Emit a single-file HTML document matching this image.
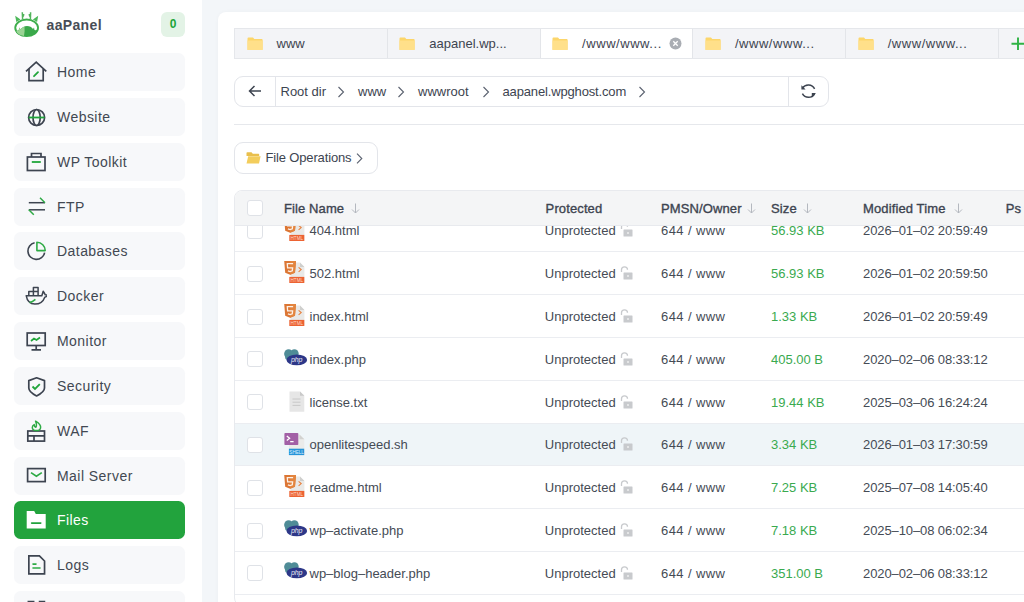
<!DOCTYPE html>
<html><head><meta charset="utf-8">
<style>
*{box-sizing:border-box;margin:0;padding:0}
html,body{width:1024px;height:602px;overflow:hidden;background:#f3f6f9;font-family:"Liberation Sans",sans-serif;color:#3d4450}
.abs{position:absolute}
#side{position:absolute;left:0;top:0;width:201.5px;height:602px;background:#fff}
.logo-t{position:absolute;left:46.5px;top:16.5px;font-size:14px;line-height:16px;font-weight:bold;color:#474d57;letter-spacing:0.35px}
.badge{position:absolute;left:161px;top:12px;width:24px;height:25px;border-radius:6px;background:#e3f3e6;color:#20a53a;font-size:12px;font-weight:bold;text-align:center;line-height:25px}
.item{position:absolute;left:14px;width:171px;height:38px;border-radius:6.5px;background:#f7f8fa}
.item .t{position:absolute;left:43px;top:0;line-height:38px;font-size:14px;color:#424852;letter-spacing:0.45px}
.item svg{position:absolute;left:11px;top:8px;width:22px;height:22px}
.item.on{background:#22a33d}
.item.on .t{color:#fff}
#card{position:absolute;left:218px;top:12px;width:830px;height:620px;background:#fff;border-radius:8px;box-shadow:0 0 4px rgba(0,0,0,0.03)}
#tabs{position:absolute;left:234px;top:28.3px;width:820px;height:30.4px;background:#f3f4f7;border:1px solid #e5e7eb}
.tab{position:absolute;top:0;height:28.4px;width:152.8px;border-right:1px solid #e3e5e9}
.tab .f{position:absolute;left:11.5px;top:7.5px;line-height:0}
.tab .f svg,#fop svg{display:block}
.tab .t{position:absolute;left:41.5px;top:0;line-height:29px;font-size:13px;color:#3d4450}
.tab.on{background:#fff}
#crumb{position:absolute;left:234px;top:75.6px;width:594.5px;height:31.6px;border:1px solid #e3e5ea;border-radius:9px;background:#fff}
.ct{position:absolute;top:0;line-height:29.6px;font-size:13px;color:#3d4450}
#hr{position:absolute;left:234px;top:123.8px;width:800px;height:1px;background:#e6e8ec}
#fop{position:absolute;left:234px;top:142px;width:144px;height:32px;border:1px solid #e3e5ea;border-radius:9px;background:#fff}
#tbl{position:absolute;left:234px;top:190.3px;width:820px;height:416px;border:1px solid #e8eaee;border-radius:8px;overflow:hidden;background:#fff}
.row{position:absolute;left:0;width:820px;height:42.785px;border-bottom:1px solid #ebedf1}
.row.hl{background:#eff5f8}
.cb{position:absolute;left:12px;width:16.4px;height:16px;border:1px solid #dfe2e7;border-radius:3px;background:#fff}

.g{color:#3aaa4f}
#head{position:absolute;left:0;top:0;width:820px;height:35px;background:#f4f5f6;border-bottom:1px solid #e8eaee}
.h{position:absolute;top:0.1px;line-height:35px;font-size:13px;color:#3d4450;-webkit-text-stroke:0.35px #3d4450;white-space:nowrap;letter-spacing:0.12px}
.rc{position:absolute;top:21.36px;height:0;font-size:13px;color:#454b55;white-space:nowrap}
.rc span{position:absolute;left:0;top:-7.6px;line-height:16px}
.rc.g span{color:#3aaa4f}
.dt span{letter-spacing:-0.1px}
.ow span{letter-spacing:0.4px}
.arr{position:absolute;top:12px}
</style></head><body>
<div id="side">
  <svg class="abs" style="left:13px;top:11px" width="28" height="28" viewBox="0 0 28 28">
    <path d="M2.2,4.8 L7.5,8.6 L3.3,11 Z M25.2,4.8 L19.9,8.6 L24.1,11 Z" fill="#4db85a"/>
    <path d="M9.3,1.3 L9.6,8 M10.8,3 L10.2,5.5 M17.6,1.3 L17.4,8 M16.2,3 L16.8,5.5" stroke="#52b45c" stroke-width="1.5"/>
    <ellipse cx="13.65" cy="16.8" rx="11.4" ry="8.3" fill="none" stroke="#3fae4d" stroke-width="1.9"/>
    <path d="M2.6,19 Q4.5,20.5 6,18.5 L6.5,16.5 L7.5,18.5 Q10,15 14,15 Q18,15 20,18 L21,16.5 L21.5,19 Q23,19.5 24.8,18.5 Q24,25 13.65,25.2 Q3.5,25 2.6,19 Z" fill="#3aa84a"/>
    <path d="M3,19.5 Q5,20.5 6,18.5 L6.5,16.5 L7.5,18.5 Q9,16.5 11.5,15.5 Q12,20 11,25 Q4.5,24 3,19.5 Z" fill="#9ad494"/>
  </svg>
  <div class="logo-t">aaPanel</div>
  <div class="badge">0</div>

  <div class="item" style="top:53.1px"><svg viewBox="0 0 22 22" fill="none" stroke="#3d4450" stroke-width="1.7"><path d="M1,10.3 L11.2,1.2 L21.3,10.3"/><path d="M4,8 V19.6 H18.2 V8"/><path d="M9,15.2 L13,11.2" stroke="#20a53a" stroke-width="1.8" stroke-linecap="round"/></svg><div class="t">Home</div></div>
  <div class="item" style="top:97.9px"><svg viewBox="0 0 22 22" fill="none" stroke="#3d4450" stroke-width="1.7"><circle cx="11.6" cy="11.5" r="8"/><ellipse cx="11.6" cy="11.5" rx="3.6" ry="8"/><path d="M3.6,11.5 H19.6" stroke="#20a53a" stroke-width="1.8"/></svg><div class="t">Website</div></div>
  <div class="item" style="top:142.8px"><svg viewBox="0 0 22 22" fill="none" stroke="#3d4450" stroke-width="1.7"><rect x="2.4" y="6" width="17.6" height="13.5"/><path d="M6.5,6 V2.5 H16 V6"/><path d="M6.8,11 H15.8" stroke="#20a53a" stroke-width="1.8"/></svg><div class="t">WP Toolkit</div></div>
  <div class="item" style="top:187.6px"><svg viewBox="0 0 22 22" fill="none" stroke="#3d4450" stroke-width="1.5"><path d="M3.8,6.7 H20"/><path d="M20,6.7 L15,1.7" stroke="#2eaa45"/><path d="M20,13.8 H3.8"/><path d="M3.8,13.8 L8.8,18.8" stroke="#2eaa45"/></svg><div class="t">FTP</div></div>
  <div class="item" style="top:232.4px"><svg viewBox="0 0 22 22" fill="none" stroke="#3d4450" stroke-width="1.6"><path d="M9.6,2.8 A8.4,8.4 0 1 0 19.6,12.6"/><path d="M11.9,2.3 V10.6 H20.2 A8.3,8.3 0 0 0 11.9,2.3 Z" stroke="#2eaa45" stroke-width="1.6" stroke-linejoin="round"/></svg><div class="t">Databases</div></div>
  <div class="item" style="top:277.3px"><svg viewBox="0 0 22 22" fill="none" stroke="#3d4450" stroke-width="1.5" stroke-linejoin="round"><path d="M1.2,10.7 H16.8 Q17.6,8.4 18.2,6.2 Q19.6,8 20.2,9.8 Q21.6,9.8 22.6,10.4 Q21.4,11.9 19.8,12.2 Q17.2,19.2 9.8,19.1 Q2.6,18.9 1.2,10.7 Z"/><path d="M3.8,10.7 V6.6 H13.1 V10.7 M8.4,10.7 V2.4 H13.1 V6.6"/><path d="M4.6,17.6 Q7.6,16.8 10.4,14.4" stroke="#2eaa45" stroke-width="1.7"/></svg><div class="t">Docker</div></div>
  <div class="item" style="top:322.1px"><svg viewBox="0 0 22 22" fill="none" stroke="#3d4450" stroke-width="1.7"><rect x="2.2" y="3" width="18" height="12.5"/><path d="M11.2,15.5 V19.5 M6.5,19.8 H16"/><path d="M6,11 L9,8.5 L11.5,10 L15,7.5" stroke="#20a53a" stroke-width="1.7"/></svg><div class="t">Monitor</div></div>
  <div class="item" style="top:366.9px"><svg viewBox="0 0 22 22" fill="none" stroke="#3d4450" stroke-width="1.7"><path d="M11.6,2.8 L19.5,5.6 V13 Q19.5,17 11.6,20.9 Q3.8,17 3.8,13 V5.6 Z" stroke-linejoin="round"/><path d="M7.5,11.5 L10,14 L14.8,9.2" stroke="#20a53a" stroke-width="1.8"/></svg><div class="t">Security</div></div>
  <div class="item" style="top:411.8px"><svg viewBox="0 0 22 22" fill="none" stroke="#3d4450" stroke-width="1.7"><rect x="2.8" y="11" width="16.7" height="10.1"/><path d="M2.8,15.9 H19.5 M9,15.9 V21"/><path d="M10.6,1.2 Q16.2,4.5 15.6,7.8 Q15,10.6 11.2,10.6 Q7.4,10.6 7.3,7.6 Q7.3,5.6 9.2,4.6 Q9.2,6.8 10.8,7.2 Q12.2,5.5 10.6,1.2 Z" stroke="#2eaa45" stroke-width="1.5" stroke-linejoin="round"/></svg><div class="t">WAF</div></div>
  <div class="item" style="top:456.6px"><svg viewBox="0 0 22 22" fill="none" stroke="#3d4450" stroke-width="1.7"><rect x="2.6" y="3.6" width="17.6" height="13"/><path d="M6,7.6 L11.4,11.2 L16.8,7.6" stroke="#2eaa45" stroke-width="1.7"/></svg><div class="t">Mail Server</div></div>
  <div class="item on" style="top:501.4px"><svg viewBox="0 0 22 22"><path d="M1.7,2.1 H9.2 L10.8,5.1 H20.7 V19.5 H1.7 Z" fill="#fff"/><path d="M6.6,14.1 H15.8" stroke="#22a33d" stroke-width="1.6" stroke-linecap="round"/></svg><div class="t">Files</div></div>
  <div class="item" style="top:546.2px"><svg viewBox="0 0 22 22" fill="none" stroke="#3d4450" stroke-width="1.7"><path d="M3.85,1.85 H14.4 L19.55,7 V19.85 H3.85 Z"/><path d="M8,10.1 H11 M8,14 H15" stroke="#2eaa45" stroke-width="1.6" stroke-linecap="round"/></svg><div class="t">Logs</div></div>
  <div class="item" style="top:591.1px"><svg viewBox="0 0 22 22" fill="none" stroke="#3d4450" stroke-width="1.7"><path d="M3.4,2.5 H8.6 V9 H3.4 Z M14.6,2.5 H19.4 V9 H14.6 Z"/></svg></div>
</div>

<div id="card"></div>
<div id="tabs"><div class="tab" style="left:0.0px"><div class="f"><svg width="16" height="13.6" viewBox="0 0 16 13"><path d="M0.5,1.2 Q0.5,0.3 1.4,0.3 H6 L7.3,1.8 H14.8 Q15.6,1.8 15.6,2.7 V12 Q15.6,12.8 14.8,12.8 H1.3 Q0.5,12.8 0.5,12 Z" fill="#fcd66b"/><path d="M0.5,3.2 H15.6 V12 Q15.6,12.8 14.8,12.8 H1.3 Q0.5,12.8 0.5,12 Z" fill="#ffe08a"/></svg></div><div class="t">www</div></div><div class="tab" style="left:152.8px"><div class="f"><svg width="16" height="13.6" viewBox="0 0 16 13"><path d="M0.5,1.2 Q0.5,0.3 1.4,0.3 H6 L7.3,1.8 H14.8 Q15.6,1.8 15.6,2.7 V12 Q15.6,12.8 14.8,12.8 H1.3 Q0.5,12.8 0.5,12 Z" fill="#fcd66b"/><path d="M0.5,3.2 H15.6 V12 Q15.6,12.8 14.8,12.8 H1.3 Q0.5,12.8 0.5,12 Z" fill="#ffe08a"/></svg></div><div class="t">aapanel.wp...</div></div><div class="tab on" style="left:305.6px"><div class="f"><svg width="16" height="13.6" viewBox="0 0 16 13"><path d="M0.5,1.2 Q0.5,0.3 1.4,0.3 H6 L7.3,1.8 H14.8 Q15.6,1.8 15.6,2.7 V12 Q15.6,12.8 14.8,12.8 H1.3 Q0.5,12.8 0.5,12 Z" fill="#fcd66b"/><path d="M0.5,3.2 H15.6 V12 Q15.6,12.8 14.8,12.8 H1.3 Q0.5,12.8 0.5,12 Z" fill="#ffe08a"/></svg></div><div class="t" style="letter-spacing:0.55px">/www/www...</div><svg class="abs" style="left:128.5px;top:8px" width="13" height="13" viewBox="0 0 13 13"><circle cx="6.5" cy="6.5" r="6" fill="#a9adb3"/><path d="M4.3,4.3 L8.7,8.7 M8.7,4.3 L4.3,8.7" stroke="#fff" stroke-width="1.3"/></svg></div><div class="tab" style="left:458.4px"><div class="f"><svg width="16" height="13.6" viewBox="0 0 16 13"><path d="M0.5,1.2 Q0.5,0.3 1.4,0.3 H6 L7.3,1.8 H14.8 Q15.6,1.8 15.6,2.7 V12 Q15.6,12.8 14.8,12.8 H1.3 Q0.5,12.8 0.5,12 Z" fill="#fcd66b"/><path d="M0.5,3.2 H15.6 V12 Q15.6,12.8 14.8,12.8 H1.3 Q0.5,12.8 0.5,12 Z" fill="#ffe08a"/></svg></div><div class="t" style="letter-spacing:0.55px">/www/www...</div></div><div class="tab" style="left:611.2px"><div class="f"><svg width="16" height="13.6" viewBox="0 0 16 13"><path d="M0.5,1.2 Q0.5,0.3 1.4,0.3 H6 L7.3,1.8 H14.8 Q15.6,1.8 15.6,2.7 V12 Q15.6,12.8 14.8,12.8 H1.3 Q0.5,12.8 0.5,12 Z" fill="#fcd66b"/><path d="M0.5,3.2 H15.6 V12 Q15.6,12.8 14.8,12.8 H1.3 Q0.5,12.8 0.5,12 Z" fill="#ffe08a"/></svg></div><div class="t" style="letter-spacing:0.55px">/www/www...</div></div><svg class="abs" style="left:776px;top:7.6px" width="14" height="14" viewBox="0 0 14 14"><path d="M7,0.5 V13 M0.5,6.8 H13.5" stroke="#2fb344" stroke-width="1.9"/></svg></div>
<div id="crumb"><svg class="abs" style="left:13px;top:7.6px" width="14" height="14" viewBox="0 0 14 14"><path d="M13,7 H1.5 M6.5,2 L1.5,7 L6.5,12" fill="none" stroke="#3d4450" stroke-width="1.5"/></svg><div class="abs" style="left:39.5px;top:0;width:1px;height:29.6px;background:#e3e5ea"></div><div class="ct" style="left:45.5px">Root dir</div><svg class="abs" style="left:101.5px;top:9px" width="8" height="12" viewBox="0 0 8 12"><path d="M1.5,1 L6.5,6 L1.5,11" fill="none" stroke="#5b6270" stroke-width="1.1"/></svg><div class="ct" style="left:123px">www</div><svg class="abs" style="left:162px;top:9px" width="8" height="12" viewBox="0 0 8 12"><path d="M1.5,1 L6.5,6 L1.5,11" fill="none" stroke="#5b6270" stroke-width="1.1"/></svg><div class="ct" style="left:183px">wwwroot</div><svg class="abs" style="left:247px;top:9px" width="8" height="12" viewBox="0 0 8 12"><path d="M1.5,1 L6.5,6 L1.5,11" fill="none" stroke="#5b6270" stroke-width="1.1"/></svg><div class="ct" style="left:267.5px;letter-spacing:-0.15px">aapanel.wpghost.com</div><svg class="abs" style="left:402.5px;top:9px" width="8" height="12" viewBox="0 0 8 12"><path d="M1.5,1 L6.5,6 L1.5,11" fill="none" stroke="#5b6270" stroke-width="1.1"/></svg><div class="abs" style="left:552.8px;top:0;width:1px;height:29.6px;background:#e3e5ea"></div><svg class="abs" style="left:565.5px;top:7.6px" width="16" height="15" viewBox="0 0 16 15"><path d="M13.6,4.9 A7,7 0 0 0 1.4,4.2 M1.4,9.6 A7,7 0 0 0 13.6,9.8" fill="none" stroke="#3d4450" stroke-width="1.5"/><path d="M0.2,1.2 V5.6 H4.4 Z M14.8,8.9 H10.6 V13.3 Z" fill="#3d4450" transform="translate(0.2 0)"/></svg></div>
<div id="hr"></div>
<div id="fop"><svg class="abs" style="left:11px;top:9px" width="15" height="12" viewBox="0 0 15 12"><path d="M0.5,1 Q0.5,0.3 1.2,0.3 H5.5 L6.8,1.8 H12.5 Q13.2,1.8 13.2,2.5 V4 H0.5 Z" fill="#e9bf4c"/><path d="M0.5,11.5 L2.2,4.3 H14.6 L13,11.5 Z" fill="#f3cd5c"/></svg><div class="ct" style="left:30.5px;line-height:30px;letter-spacing:-0.15px">File Operations</div><svg class="abs" style="left:120.5px;top:9.8px" width="7" height="11" viewBox="0 0 7 11"><path d="M1,0.6 L5.8,5.5 L1,10.4" fill="none" stroke="#5b6270" stroke-width="1.1"/></svg></div>
<div id="tbl"><div class="row" style="top:18.40px"><div class="cb" style="top:13.4px"></div><div class="abs" style="left:48.7px;top:8.959999999999999px;line-height:0"><svg width="21" height="22" viewBox="0 0 21 22" style="display:block"><path d="M6.5,1.6 H16 L20.4,6 V21.6 H6.5 Z" fill="#e9e9e7"/><path d="M16,1.6 V6 H20.4 Z" fill="#cfcfcd"/><path d="M0.2,0 H12 L11,11.8 L6.1,13.7 L1.2,11.8 Z" fill="#dc7634"/><path d="M6.1,0 H12 L11,11.8 L6.1,13.7 Z" fill="#e3853f"/><path d="M9.1,2.6 H3.3 L3.6,6.8 H8.6 L8.3,9.8 L6.1,10.6 L3.9,9.8" fill="none" stroke="#fdf1e6" stroke-width="1.3"/><path d="M14.6,6.3 L17.2,8.6 L14.6,10.9" fill="none" stroke="#e8813f" stroke-width="1.1"/><rect x="5.3" y="15.9" width="15" height="6.1" fill="#ec6333"/><text x="12.8" y="20.6" font-size="4.6" fill="#ffd9c8" text-anchor="middle" font-family="Liberation Sans">HTML</text></svg></div><div class="rc" style="left:74.5px"><span>404.html</span></div><div class="rc" style="left:309.8px"><span>Unprotected</span><svg class="abs" style="left:74px;top:-7.6px" width="14" height="14" viewBox="0 0 14 14"><path d="M2.5,6 V3.8 A3,3 0 0 1 8.5,3.8" fill="none" stroke="#c8cacd" stroke-width="1.3"/><rect x="4.5" y="6.5" width="9" height="7" rx="0.5" fill="#c8cacd"/><rect x="8.5" y="9" width="1" height="2" fill="#fff"/></svg></div><div class="rc ow" style="left:426px"><span>644 / www</span></div><div class="rc g" style="left:536px"><span>56.93 KB</span></div><div class="rc dt" style="left:628px"><span>2026&#8211;01&#8211;02 20:59:49</span></div></div><div class="row" style="top:61.18px"><div class="cb" style="top:13.4px"></div><div class="abs" style="left:48.7px;top:8.959999999999999px;line-height:0"><svg width="21" height="22" viewBox="0 0 21 22" style="display:block"><path d="M6.5,1.6 H16 L20.4,6 V21.6 H6.5 Z" fill="#e9e9e7"/><path d="M16,1.6 V6 H20.4 Z" fill="#cfcfcd"/><path d="M0.2,0 H12 L11,11.8 L6.1,13.7 L1.2,11.8 Z" fill="#dc7634"/><path d="M6.1,0 H12 L11,11.8 L6.1,13.7 Z" fill="#e3853f"/><path d="M9.1,2.6 H3.3 L3.6,6.8 H8.6 L8.3,9.8 L6.1,10.6 L3.9,9.8" fill="none" stroke="#fdf1e6" stroke-width="1.3"/><path d="M14.6,6.3 L17.2,8.6 L14.6,10.9" fill="none" stroke="#e8813f" stroke-width="1.1"/><rect x="5.3" y="15.9" width="15" height="6.1" fill="#ec6333"/><text x="12.8" y="20.6" font-size="4.6" fill="#ffd9c8" text-anchor="middle" font-family="Liberation Sans">HTML</text></svg></div><div class="rc" style="left:74.5px"><span>502.html</span></div><div class="rc" style="left:309.8px"><span>Unprotected</span><svg class="abs" style="left:74px;top:-7.6px" width="14" height="14" viewBox="0 0 14 14"><path d="M2.5,6 V3.8 A3,3 0 0 1 8.5,3.8" fill="none" stroke="#c8cacd" stroke-width="1.3"/><rect x="4.5" y="6.5" width="9" height="7" rx="0.5" fill="#c8cacd"/><rect x="8.5" y="9" width="1" height="2" fill="#fff"/></svg></div><div class="rc ow" style="left:426px"><span>644 / www</span></div><div class="rc g" style="left:536px"><span>56.93 KB</span></div><div class="rc dt" style="left:628px"><span>2026&#8211;01&#8211;02 20:59:50</span></div></div><div class="row" style="top:103.97px"><div class="cb" style="top:13.4px"></div><div class="abs" style="left:48.7px;top:8.959999999999999px;line-height:0"><svg width="21" height="22" viewBox="0 0 21 22" style="display:block"><path d="M6.5,1.6 H16 L20.4,6 V21.6 H6.5 Z" fill="#e9e9e7"/><path d="M16,1.6 V6 H20.4 Z" fill="#cfcfcd"/><path d="M0.2,0 H12 L11,11.8 L6.1,13.7 L1.2,11.8 Z" fill="#dc7634"/><path d="M6.1,0 H12 L11,11.8 L6.1,13.7 Z" fill="#e3853f"/><path d="M9.1,2.6 H3.3 L3.6,6.8 H8.6 L8.3,9.8 L6.1,10.6 L3.9,9.8" fill="none" stroke="#fdf1e6" stroke-width="1.3"/><path d="M14.6,6.3 L17.2,8.6 L14.6,10.9" fill="none" stroke="#e8813f" stroke-width="1.1"/><rect x="5.3" y="15.9" width="15" height="6.1" fill="#ec6333"/><text x="12.8" y="20.6" font-size="4.6" fill="#ffd9c8" text-anchor="middle" font-family="Liberation Sans">HTML</text></svg></div><div class="rc" style="left:74.5px"><span>index.html</span></div><div class="rc" style="left:309.8px"><span>Unprotected</span><svg class="abs" style="left:74px;top:-7.6px" width="14" height="14" viewBox="0 0 14 14"><path d="M2.5,6 V3.8 A3,3 0 0 1 8.5,3.8" fill="none" stroke="#c8cacd" stroke-width="1.3"/><rect x="4.5" y="6.5" width="9" height="7" rx="0.5" fill="#c8cacd"/><rect x="8.5" y="9" width="1" height="2" fill="#fff"/></svg></div><div class="rc ow" style="left:426px"><span>644 / www</span></div><div class="rc g" style="left:536px"><span>1.33 KB</span></div><div class="rc dt" style="left:628px"><span>2026&#8211;01&#8211;02 20:59:49</span></div></div><div class="row" style="top:146.75px"><div class="cb" style="top:13.4px"></div><div class="abs" style="left:48.7px;top:10.459999999999999px;line-height:0"><svg width="24" height="17" viewBox="0 0 24 17" style="display:block"><ellipse cx="4.6" cy="4.6" rx="4.4" ry="4.4" fill="#4f8c97"/><ellipse cx="10.4" cy="4.8" rx="4.3" ry="4.6" fill="#4f8c97"/><path d="M0.4,5 L1.5,10 L4,11.5 L9,10 Z" fill="#4f8c97"/><ellipse cx="12.8" cy="10.9" rx="10.3" ry="5.4" fill="#2d3788"/><text x="12.6" y="13.2" font-size="7" font-style="italic" fill="#e8ecf6" text-anchor="middle" font-family="Liberation Sans" letter-spacing="-0.2">php</text></svg></div><div class="rc" style="left:74.5px"><span>index.php</span></div><div class="rc" style="left:309.8px"><span>Unprotected</span><svg class="abs" style="left:74px;top:-7.6px" width="14" height="14" viewBox="0 0 14 14"><path d="M2.5,6 V3.8 A3,3 0 0 1 8.5,3.8" fill="none" stroke="#c8cacd" stroke-width="1.3"/><rect x="4.5" y="6.5" width="9" height="7" rx="0.5" fill="#c8cacd"/><rect x="8.5" y="9" width="1" height="2" fill="#fff"/></svg></div><div class="rc ow" style="left:426px"><span>644 / www</span></div><div class="rc g" style="left:536px"><span>405.00 B</span></div><div class="rc dt" style="left:628px"><span>2020&#8211;02&#8211;06 08:33:12</span></div></div><div class="row" style="top:189.54px"><div class="cb" style="top:13.4px"></div><div class="abs" style="left:54.0px;top:10.36px;line-height:0"><svg width="16" height="21" viewBox="0 0 16 21" style="display:block"><path d="M0.5,0.5 H11 L15.3,4.8 V20.8 H0.5 Z" fill="#e6e6e6"/><path d="M11,0.5 V4.8 H15.3 Z" fill="#c9c9c9"/><path d="M3.5,8 H11.5 M3.5,11.2 H11.5 M3.5,14.4 H11.5" stroke="#c4c4c4" stroke-width="0.9"/></svg></div><div class="rc" style="left:74.5px"><span>license.txt</span></div><div class="rc" style="left:309.8px"><span>Unprotected</span><svg class="abs" style="left:74px;top:-7.6px" width="14" height="14" viewBox="0 0 14 14"><path d="M2.5,6 V3.8 A3,3 0 0 1 8.5,3.8" fill="none" stroke="#c8cacd" stroke-width="1.3"/><rect x="4.5" y="6.5" width="9" height="7" rx="0.5" fill="#c8cacd"/><rect x="8.5" y="9" width="1" height="2" fill="#fff"/></svg></div><div class="rc ow" style="left:426px"><span>644 / www</span></div><div class="rc g" style="left:536px"><span>19.44 KB</span></div><div class="rc dt" style="left:628px"><span>2025&#8211;03&#8211;06 16:24:24</span></div></div><div class="row hl" style="top:232.32px"><div class="cb" style="top:13.4px"></div><div class="abs" style="left:48.7px;top:9.36px;line-height:0"><svg width="21" height="23" viewBox="0 0 21 23" style="display:block"><path d="M5,1.5 H15.5 L20.3,6.3 V22.2 H5 Z" fill="#ebebea"/><path d="M15.5,1.5 V6.3 H20.3 Z" fill="#d2d2d0"/><rect x="0.4" y="0" width="13.9" height="12" rx="0.8" fill="#a260a6"/><path d="M2.8,3 L5.6,5.2 L2.8,7.4 M6.2,8.6 H9.6" fill="none" stroke="#fff" stroke-width="1.3"/><rect x="4.9" y="15.7" width="15.3" height="6.4" fill="#2694d8"/><text x="12.6" y="20.6" font-size="4.6" fill="#dff0ff" text-anchor="middle" font-family="Liberation Sans">SHELL</text></svg></div><div class="rc" style="left:74.5px"><span>openlitespeed.sh</span></div><div class="rc" style="left:309.8px"><span>Unprotected</span><svg class="abs" style="left:74px;top:-7.6px" width="14" height="14" viewBox="0 0 14 14"><path d="M2.5,6 V3.8 A3,3 0 0 1 8.5,3.8" fill="none" stroke="#c8cacd" stroke-width="1.3"/><rect x="4.5" y="6.5" width="9" height="7" rx="0.5" fill="#c8cacd"/><rect x="8.5" y="9" width="1" height="2" fill="#fff"/></svg></div><div class="rc ow" style="left:426px"><span>644 / www</span></div><div class="rc g" style="left:536px"><span>3.34 KB</span></div><div class="rc dt" style="left:628px"><span>2026&#8211;01&#8211;03 17:30:59</span></div></div><div class="row" style="top:275.11px"><div class="cb" style="top:13.4px"></div><div class="abs" style="left:48.7px;top:8.959999999999999px;line-height:0"><svg width="21" height="22" viewBox="0 0 21 22" style="display:block"><path d="M6.5,1.6 H16 L20.4,6 V21.6 H6.5 Z" fill="#e9e9e7"/><path d="M16,1.6 V6 H20.4 Z" fill="#cfcfcd"/><path d="M0.2,0 H12 L11,11.8 L6.1,13.7 L1.2,11.8 Z" fill="#dc7634"/><path d="M6.1,0 H12 L11,11.8 L6.1,13.7 Z" fill="#e3853f"/><path d="M9.1,2.6 H3.3 L3.6,6.8 H8.6 L8.3,9.8 L6.1,10.6 L3.9,9.8" fill="none" stroke="#fdf1e6" stroke-width="1.3"/><path d="M14.6,6.3 L17.2,8.6 L14.6,10.9" fill="none" stroke="#e8813f" stroke-width="1.1"/><rect x="5.3" y="15.9" width="15" height="6.1" fill="#ec6333"/><text x="12.8" y="20.6" font-size="4.6" fill="#ffd9c8" text-anchor="middle" font-family="Liberation Sans">HTML</text></svg></div><div class="rc" style="left:74.5px"><span>readme.html</span></div><div class="rc" style="left:309.8px"><span>Unprotected</span><svg class="abs" style="left:74px;top:-7.6px" width="14" height="14" viewBox="0 0 14 14"><path d="M2.5,6 V3.8 A3,3 0 0 1 8.5,3.8" fill="none" stroke="#c8cacd" stroke-width="1.3"/><rect x="4.5" y="6.5" width="9" height="7" rx="0.5" fill="#c8cacd"/><rect x="8.5" y="9" width="1" height="2" fill="#fff"/></svg></div><div class="rc ow" style="left:426px"><span>644 / www</span></div><div class="rc g" style="left:536px"><span>7.25 KB</span></div><div class="rc dt" style="left:628px"><span>2025&#8211;07&#8211;08 14:05:40</span></div></div><div class="row" style="top:317.89px"><div class="cb" style="top:13.4px"></div><div class="abs" style="left:48.7px;top:10.459999999999999px;line-height:0"><svg width="24" height="17" viewBox="0 0 24 17" style="display:block"><ellipse cx="4.6" cy="4.6" rx="4.4" ry="4.4" fill="#4f8c97"/><ellipse cx="10.4" cy="4.8" rx="4.3" ry="4.6" fill="#4f8c97"/><path d="M0.4,5 L1.5,10 L4,11.5 L9,10 Z" fill="#4f8c97"/><ellipse cx="12.8" cy="10.9" rx="10.3" ry="5.4" fill="#2d3788"/><text x="12.6" y="13.2" font-size="7" font-style="italic" fill="#e8ecf6" text-anchor="middle" font-family="Liberation Sans" letter-spacing="-0.2">php</text></svg></div><div class="rc" style="left:74.5px"><span>wp&#8211;activate.php</span></div><div class="rc" style="left:309.8px"><span>Unprotected</span><svg class="abs" style="left:74px;top:-7.6px" width="14" height="14" viewBox="0 0 14 14"><path d="M2.5,6 V3.8 A3,3 0 0 1 8.5,3.8" fill="none" stroke="#c8cacd" stroke-width="1.3"/><rect x="4.5" y="6.5" width="9" height="7" rx="0.5" fill="#c8cacd"/><rect x="8.5" y="9" width="1" height="2" fill="#fff"/></svg></div><div class="rc ow" style="left:426px"><span>644 / www</span></div><div class="rc g" style="left:536px"><span>7.18 KB</span></div><div class="rc dt" style="left:628px"><span>2025&#8211;10&#8211;08 06:02:34</span></div></div><div class="row" style="top:360.68px"><div class="cb" style="top:13.4px"></div><div class="abs" style="left:48.7px;top:10.459999999999999px;line-height:0"><svg width="24" height="17" viewBox="0 0 24 17" style="display:block"><ellipse cx="4.6" cy="4.6" rx="4.4" ry="4.4" fill="#4f8c97"/><ellipse cx="10.4" cy="4.8" rx="4.3" ry="4.6" fill="#4f8c97"/><path d="M0.4,5 L1.5,10 L4,11.5 L9,10 Z" fill="#4f8c97"/><ellipse cx="12.8" cy="10.9" rx="10.3" ry="5.4" fill="#2d3788"/><text x="12.6" y="13.2" font-size="7" font-style="italic" fill="#e8ecf6" text-anchor="middle" font-family="Liberation Sans" letter-spacing="-0.2">php</text></svg></div><div class="rc" style="left:74.5px"><span>wp&#8211;blog&#8211;header.php</span></div><div class="rc" style="left:309.8px"><span>Unprotected</span><svg class="abs" style="left:74px;top:-7.6px" width="14" height="14" viewBox="0 0 14 14"><path d="M2.5,6 V3.8 A3,3 0 0 1 8.5,3.8" fill="none" stroke="#c8cacd" stroke-width="1.3"/><rect x="4.5" y="6.5" width="9" height="7" rx="0.5" fill="#c8cacd"/><rect x="8.5" y="9" width="1" height="2" fill="#fff"/></svg></div><div class="rc ow" style="left:426px"><span>644 / www</span></div><div class="rc g" style="left:536px"><span>351.00 B</span></div><div class="rc dt" style="left:628px"><span>2020&#8211;02&#8211;06 08:33:12</span></div></div><div class="row" style="top:403.46px"><div class="cb" style="top:13.4px"></div><div class="abs" style="left:48.7px;top:10.459999999999999px;line-height:0"><svg width="24" height="17" viewBox="0 0 24 17" style="display:block"><ellipse cx="4.6" cy="4.6" rx="4.4" ry="4.4" fill="#4f8c97"/><ellipse cx="10.4" cy="4.8" rx="4.3" ry="4.6" fill="#4f8c97"/><path d="M0.4,5 L1.5,10 L4,11.5 L9,10 Z" fill="#4f8c97"/><ellipse cx="12.8" cy="10.9" rx="10.3" ry="5.4" fill="#2d3788"/><text x="12.6" y="13.2" font-size="7" font-style="italic" fill="#e8ecf6" text-anchor="middle" font-family="Liberation Sans" letter-spacing="-0.2">php</text></svg></div><div class="rc" style="left:74.5px"><span>wp&#8211;comments&#8211;post.php</span></div><div class="rc" style="left:309.8px"><span>Unprotected</span><svg class="abs" style="left:74px;top:-7.6px" width="14" height="14" viewBox="0 0 14 14"><path d="M2.5,6 V3.8 A3,3 0 0 1 8.5,3.8" fill="none" stroke="#c8cacd" stroke-width="1.3"/><rect x="4.5" y="6.5" width="9" height="7" rx="0.5" fill="#c8cacd"/><rect x="8.5" y="9" width="1" height="2" fill="#fff"/></svg></div><div class="rc ow" style="left:426px"><span>644 / www</span></div><div class="rc g" style="left:536px"><span>2.32 KB</span></div><div class="rc dt" style="left:628px"><span>2025&#8211;04&#8211;15 08:53:34</span></div></div><div id="head"><div class="cb" style="top:9.1px"></div><div class="h" style="left:48.9px">File Name</div><svg class="arr" style="left:116px" width="9" height="11" viewBox="0 0 9 11"><path d="M4.5,0.5 V10 M1,6.5 L4.5,10 L8,6.5" fill="none" stroke="#b4b8bf" stroke-width="1"/></svg><div class="h" style="left:310.6px">Protected</div><div class="h" style="left:426px">PMSN/Owner</div><svg class="arr" style="left:512px" width="9" height="11" viewBox="0 0 9 11"><path d="M4.5,0.5 V10 M1,6.5 L4.5,10 L8,6.5" fill="none" stroke="#b4b8bf" stroke-width="1"/></svg><div class="h" style="left:536px">Size</div><svg class="arr" style="left:568px" width="9" height="11" viewBox="0 0 9 11"><path d="M4.5,0.5 V10 M1,6.5 L4.5,10 L8,6.5" fill="none" stroke="#b4b8bf" stroke-width="1"/></svg><div class="h" style="left:628px">Modified Time</div><svg class="arr" style="left:718.5px" width="9" height="11" viewBox="0 0 9 11"><path d="M4.5,0.5 V10 M1,6.5 L4.5,10 L8,6.5" fill="none" stroke="#b4b8bf" stroke-width="1"/></svg><div class="h" style="left:770.7px">Ps</div></div></div>
</body></html>
